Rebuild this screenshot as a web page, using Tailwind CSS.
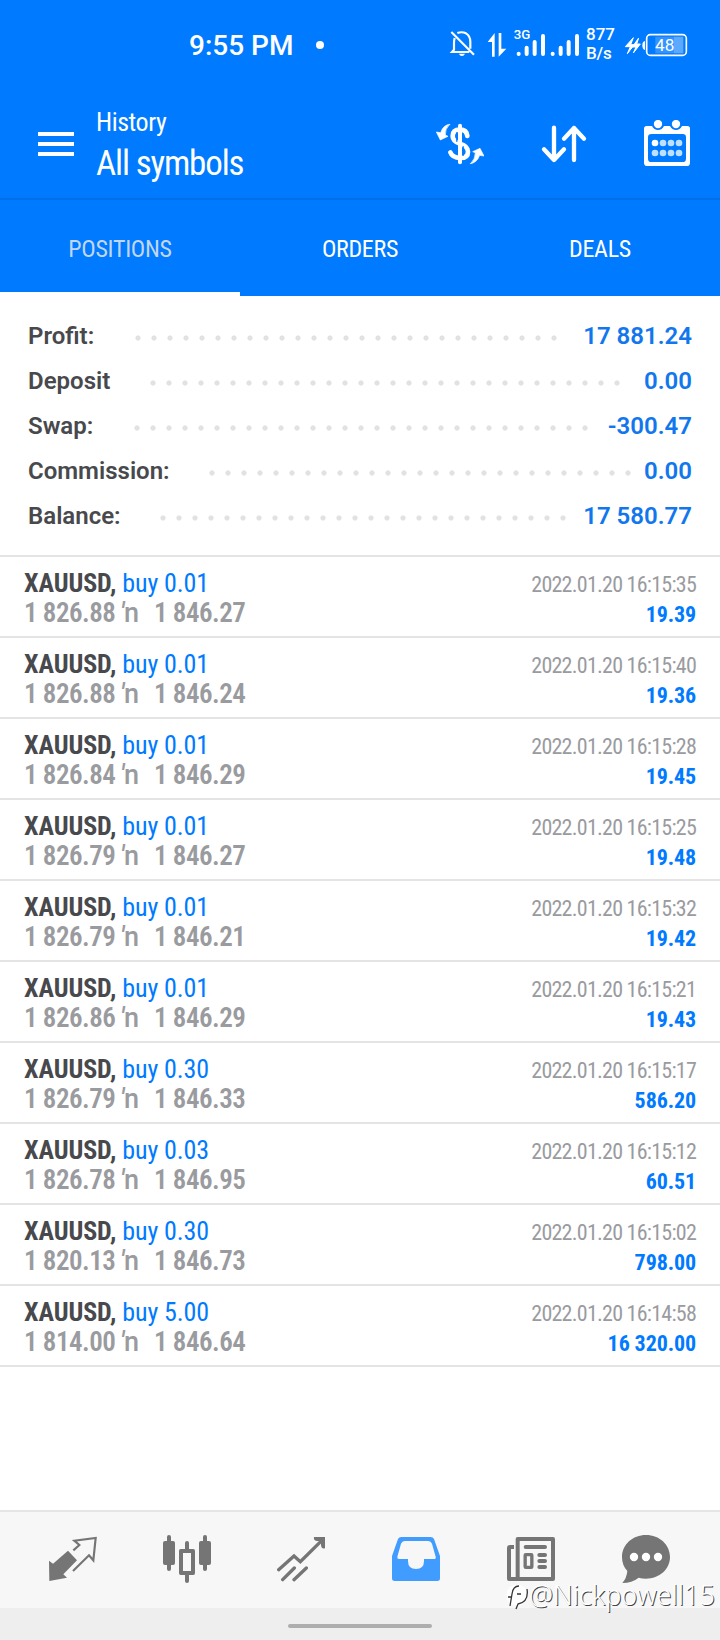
<!DOCTYPE html>
<html lang="en">
<head>
  <meta charset="UTF-8" />
  <title>History</title>
  <script src="https://cdn.jsdelivr.net/npm/@tailwindcss/browser@4"></script>
</head>
<body class="bg-white font-['Roboto',sans-serif] text-[#48494d]">

  <div class="relative w-[720px] h-[1640px] flex flex-col overflow-hidden">

    <header class="bg-[#007aff] text-white">
      <!-- Status bar -->
      <div class="h-[90px] pl-[189px] pr-8 flex items-center">
        <span class="mt-0.5 text-[28px] font-medium leading-none whitespace-nowrap">9:55 PM</span>
        <span class="w-2 h-2 ml-[23px] rounded-full bg-white"></span>
        <div class="ml-auto flex items-center -mt-1.5">
          <svg class="w-7 h-9" viewBox="27 42 84 108" fill="none" stroke="#fff" stroke-width="6.500">
            <path d="M34 66L102 134M52 69Q66 64 78 70Q91 78 91 95V116M44 84Q42 91 42 99V119L36 126H88" />
            <path d="M57 131H75Q72 138 66 138Q59 138 57 131Z" fill="#fff" stroke="none" />
          </svg>
          <svg class="w-[22px] h-9 ml-[9px]" viewBox="138 42 66 108" fill="#fff">
            <path d="M164 69V140H156V96H143ZM176 69H184V116H199L176 140Z" />
          </svg>
          <svg class="w-[70px] h-9 ml-1" viewBox="216 42 210 108" stroke="#fff" stroke-width="12" stroke-linecap="round">
            <text x="221" y="87" font-size="38" fill="#fff" stroke="none" textLength="50" lengthAdjust="spacingAndGlyphs" font-weight="500">3G</text>
            <path d="M236 131v1M260 113v19M284 96v36M309 78v54M338 131v1M362 113v19M386 96v36M411 78v54" />
          </svg>
          <div class="w-[38px] ml-1 text-[17px] leading-[19px] font-medium pt-1">
            <div class="-mt-px">877</div>
            <div class="tracking-[-0.2px]">B/s</div>
          </div>
          <svg class="w-16 h-9" viewBox="552 42 192 108">
            <path d="M580 83L556 110H571L562 131L583 104H572ZM596 84L577 111H588L580 129L601 102H590Z" fill="#fff" stroke="#fff" stroke-width="3" />
            <path d="M615 93Q607 94 607 106Q607 118 615 120Z" fill="#fff" />
            <rect x="620" y="74" width="119" height="62" rx="11" fill="none" stroke="#fff" stroke-width="5" />
            <rect x="702" y="80" width="28" height="50" fill="#fff" fill-opacity=".36" />
            <rect x="646" y="80" width="56" height="50" fill="#fff" fill-opacity=".2" />
            <text x="674" y="122" text-anchor="middle" font-size="47" fill="#fff" textLength="58" lengthAdjust="spacingAndGlyphs">48</text>
          </svg>
        </div>
      </div>

      <!-- Toolbar -->
      <div class="h-[110px] pl-[38px] pr-[29px] pt-[17px] flex items-start border-b-2 border-[#0070ea]">
        <div class="w-9 mt-[25px] flex flex-col gap-1.5">
          <span class="h-1 bg-white"></span>
          <span class="h-1 bg-white"></span>
          <span class="h-1 bg-white"></span>
        </div>
        <div class="ml-[22px] font-stretch-condensed whitespace-nowrap">
          <div class="text-[26px] leading-[30px] tracking-[-0.45px]">History</div>
          <div class="mt-[7px] text-[35px] leading-10 tracking-[-1.15px]">All symbols</div>
        </div>
        <div class="ml-auto mt-[13px] flex gap-14">
          <svg class="w-12 h-12" viewBox="48 60 144 144" fill="none" stroke="#fff" stroke-linecap="round">
            <path d="M120 77V187" stroke-width="12" />
            <path d="M142 108Q140 89 120 89Q98 89 98 108Q98 124 120 131Q144 138 144 155Q144 174 121 174Q97 174 91 157" stroke-width="14" />
            <path d="M89 73Q69 75 62 98L49 96L61 120L84 109L76 105Q74 88 89 73ZM152 191Q171 188 179 166L192 168L180 145L158 155L166 158Q166 176 152 191Z" fill="#fff" stroke-width="2" />
            <path d="M110.500 98V124M129.500 140V166" stroke="#007aff" stroke-width="4" />
          </svg>
          <svg class="w-12 h-12" viewBox="360 60 144 144" fill="none" stroke="#fff" stroke-width="13" stroke-linecap="round" stroke-linejoin="round">
            <path d="M402 83V180M372 148L402 180L432 148M462 180V84M432 116L462 84L492 116" />
          </svg>
          <svg class="w-12 h-12 -ml-px" viewBox="669 60 144 144">
            <path fill-rule="evenodd" d="M680 78H696Q702 90 714 90Q726 90 732 78H750Q756 90 768 90Q780 90 786 78H802Q810 78 810 86V188Q810 198 800 198H682Q672 198 672 188V86Q672 78 680 78ZM694 102Q684 102 684 112V176Q684 186 694 186H788Q798 186 798 176V112Q798 102 788 102Z" fill="#fff" />
            <g fill="#fff">
              <circle cx="714" cy="72" r="12.500" /><circle cx="768" cy="72" r="12.500" />
              <circle cx="705" cy="129" r="10" />
            </g>
            <g fill="#bfe0ff">
              <circle cx="729" cy="129" r="10" /><circle cx="753" cy="129" r="10" /><circle cx="777" cy="129" r="10" />
              <circle cx="705" cy="159" r="10" /><circle cx="729" cy="159" r="10" /><circle cx="753" cy="159" r="10" /><circle cx="777" cy="159" r="10" />
            </g>
          </svg>
        </div>
      </div>

      <!-- Tabs -->
      <nav class="h-24 grid grid-cols-3 text-center text-[24px] leading-[98px] tracking-[-0.3px] font-stretch-condensed">
        <a class="border-b-4 border-white text-[#c2d6f2] h-24">POSITIONS</a>
        <a>ORDERS</a>
        <a>DEALS</a>
      </nav>
    </header>

    <section id="summary" class="pt-[17px] pb-[17px] px-7"></section>
    <section id="deals" class="border-t-2 border-[#e4e4e5]"></section>

    <!-- Bottom navigation -->
    <nav class="mt-auto h-[98px] pt-[23px] pl-[49px] pr-[50px] flex justify-between border-t-2 border-[#e5e5e5] bg-[#f7f7f7]">
      <svg class="w-12 h-12" viewBox="147 105 144 144">
        <path d="M147 182L159 191L204 152L231 181L190 223L201 233L148 243Z" fill="#757575" />
        <path d="M220 151L238 135L223 122L287 114L280 181L267 166L219 213" fill="none" stroke="#757575" stroke-width="6.500" />
      </svg>
      <svg class="w-12 h-12 -translate-x-px" viewBox="489 105 144 144" fill="#757575">
        <rect x="489" y="123" width="36" height="72" rx="6" /><rect x="501" y="105" width="12" height="108" rx="6" />
        <rect x="597" y="123" width="36" height="72" rx="6" /><rect x="609" y="105" width="12" height="108" rx="6" />
        <path d="M555 129Q555 123 561 123Q567 123 567 129V147H580Q585 147 585 152V219Q585 225 580 225H567V243Q567 249 561 249Q555 249 555 243V225H542Q537 225 537 219V152Q537 147 542 147H555ZM549 159V213H573V159Z" fill-rule="evenodd" />
      </svg>
      <svg class="w-12 h-12 -translate-x-px" viewBox="831 105 144 144" fill="none" stroke="#757575" stroke-width="10" stroke-linecap="round">
        <path d="M836 209L882 168L901 185L968 119M848 239L883 204M882 239L919 204" />
        <path d="M942 111H975V145Q964 148 963 135V123H950Q940 122 942 111Z" fill="#757575" stroke="none" />
      </svg>
      <svg class="w-12 h-12 -translate-x-px" viewBox="96 105 144 144">
        <path d="M124 111H212Q219 111 222 117L240 168V235Q240 243 232 243H104Q96 243 96 235V168L114 117Q117 111 124 111ZM134 123Q126 123 123 131L112 170Q111 177 117 177H144V183Q144 207 168 207Q192 207 192 183V177H221Q229 177 227 170L216 131Q213 123 205 123Z" fill="#409cff" fill-rule="evenodd" />
      </svg>
      <svg class="w-12 h-12" viewBox="441 105 144 144" fill="none" stroke="#757575" stroke-width="12">
        <path d="M473 117H579V237H473ZM473 237H447V144Q447 141 450 141H462" stroke-linejoin="round" />
        <path d="M497 141H555M538 165H555M538 183H555M538 201H555" stroke-linecap="round" />
        <rect x="495.500" y="164" width="20" height="38" rx="2" stroke-width="10" />
      </svg>
      <svg class="w-12 h-12" viewBox="786 105 144 144">
        <path d="M858 105C898 105 930 134 930 171C930 208 898 236 858 236Q846 236 836 233Q816 249 787 249Q800 235 802 213Q786 196 786 171C786 134 818 105 858 105Z" fill="#757575" />
        <g fill="#fff"><circle cx="822" cy="171" r="12.500" /><circle cx="858" cy="171" r="12.500" /><circle cx="894" cy="171" r="12.500" /></g>
      </svg>
    </nav>

    <div class="h-8 pt-4 bg-[#eeeeee]">
      <div class="w-36 h-1 mx-auto rounded-full bg-[#aeaeae]"></div>
    </div>

    <!-- Watermark -->
    <div class="absolute left-[505px] top-[1577px] flex items-center text-white whitespace-nowrap">
      <svg class="w-6 h-9" viewBox="0 0 24 36" fill="none">
        <circle cx="12" cy="18" r="10.500" fill="#fff" />
        <path d="M3 20H7M5 29L7 17Q8 9 14 9M12 17H16M22 12Q24 25 13 27L11 32" stroke="#333" stroke-width="1.300" />
      </svg>
      <span class="font-['Noto_Sans',sans-serif] font-light text-[27px] leading-9 [text-shadow:1px_1px_0_#444]">@Nickpowell15</span>
    </div>
  </div>

  <script>
    // dots: [x of the leader, number of dots]
    const summary = [
      { label: 'Profit:', value: '17 881.24', dots: [129.5, 27] },
      { label: 'Deposit', value: '0.00', dots: [144.5, 30] },
      { label: 'Swap:', value: '-300.47', dots: [128.5, 29] },
      { label: 'Commission:', value: '0.00', dots: [203.5, 27] },
      { label: 'Balance:', value: '17 580.77', dots: [154.5, 26] },
    ];

    const deals = [
      ['0.01', '1 826.88', '1 846.27', '16:15:35', '19.39'],
      ['0.01', '1 826.88', '1 846.24', '16:15:40', '19.36'],
      ['0.01', '1 826.84', '1 846.29', '16:15:28', '19.45'],
      ['0.01', '1 826.79', '1 846.27', '16:15:25', '19.48'],
      ['0.01', '1 826.79', '1 846.21', '16:15:32', '19.42'],
      ['0.01', '1 826.86', '1 846.29', '16:15:21', '19.43'],
      ['0.30', '1 826.79', '1 846.33', '16:15:17', '586.20'],
      ['0.03', '1 826.78', '1 846.95', '16:15:12', '60.51'],
      ['0.30', '1 820.13', '1 846.73', '16:15:02', '798.00'],
      ['5.00', '1 814.00', '1 846.64', '16:14:58', '16 320.00'],
    ];

    document.getElementById('summary').innerHTML = summary.map(row => `
      <div class="h-[45px] flex text-[24px] leading-[47px] font-semibold whitespace-nowrap">
        <span style="width: ${row.dots[0] - 28}px">${row.label}</span>
        <span class="mt-[5px] h-10 bg-[radial-gradient(circle,#e2e2e2_2.2px,transparent_3px)] bg-size-[16px_40px]" style="width: ${row.dots[1] * 16}px"></span>
        <span class="ml-auto text-[#1277ec]">${row.value}</span>
      </div>
    `).join('');

    document.getElementById('deals').innerHTML = deals.map(([lots, open, close, time, profit]) => `
      <div class="h-[81px] pt-[11px] px-6 border-b-2 border-[#e4e4e5] font-stretch-condensed whitespace-nowrap">
        <div class="h-[30px] flex justify-between items-baseline leading-[30px]">
          <span class="text-[26px] tracking-[-0.1px]"><b>XAUUSD,</b> <span class="text-[#007aff]">buy ${lots}</span></span>
          <span class="text-[22px] tracking-[-0.75px] text-[#9a9b9f]">2022.01.20 ${time}</span>
        </div>
        <div class="h-[30px] flex items-baseline leading-[30px] text-[#9a9b9f]">
          <span class="w-[96px] text-[27px] font-semibold tracking-[-0.5px]">${open}</span>
          <span class="w-[34px] text-[27px] font-medium font-stretch-normal tracking-[-0.5px]"><i>′</i>n</span>
          <span class="text-[27px] font-semibold tracking-[-0.5px]">${close}</span>
          <span class="ml-auto text-[22px] font-bold tracking-[-0.1px] text-[#007aff]">${profit}</span>
        </div>
      </div>
    `).join('');
  </script>
</body>
</html>
